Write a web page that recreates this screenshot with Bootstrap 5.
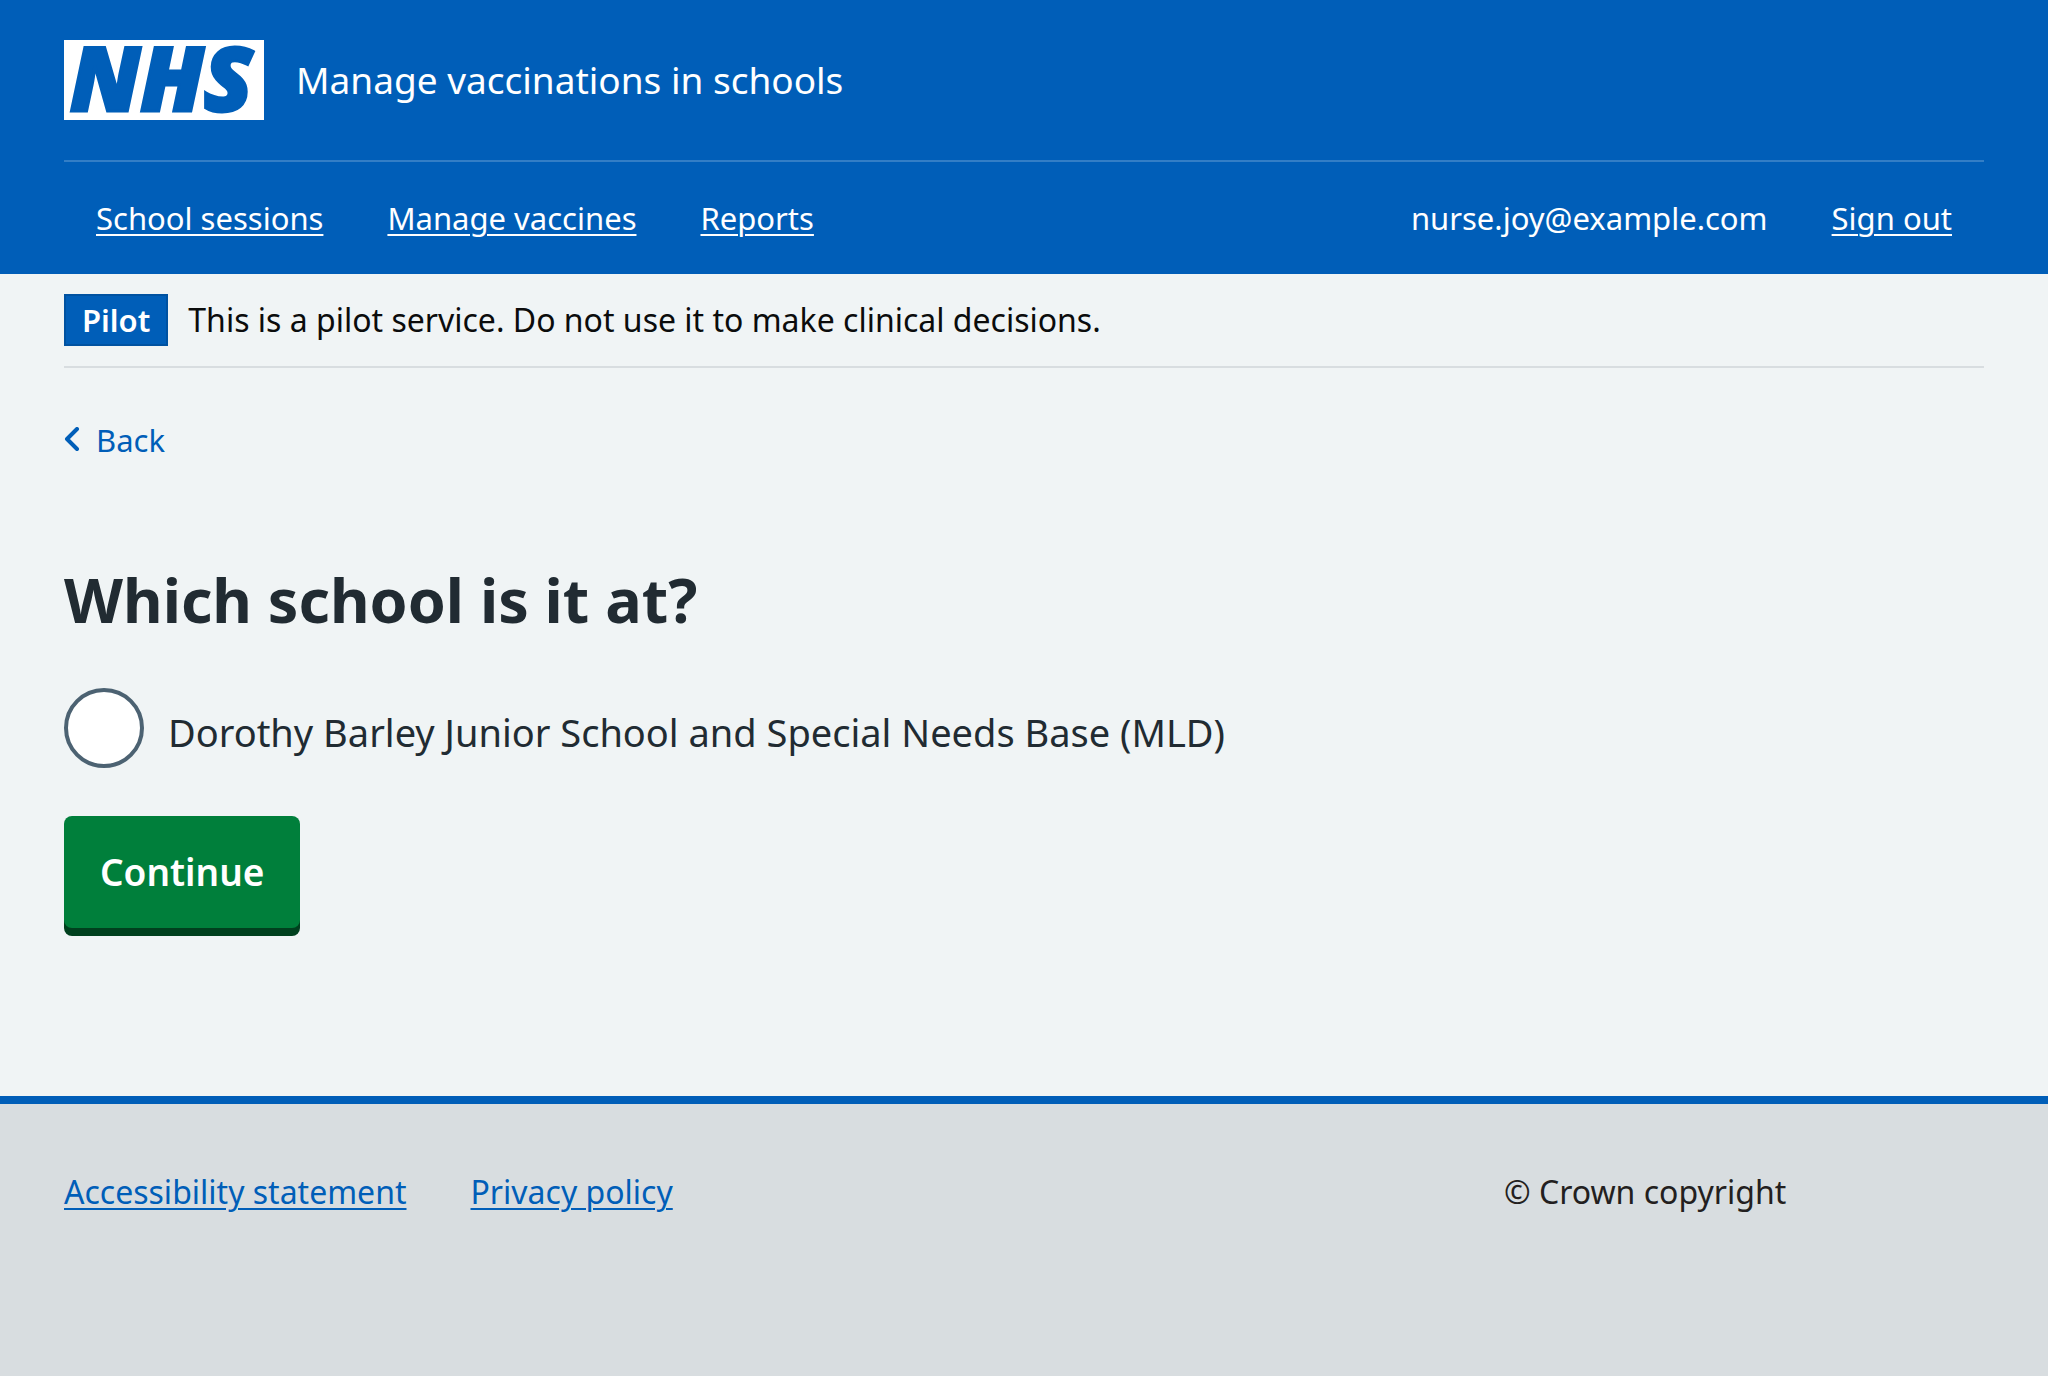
<!DOCTYPE html>
<html lang="en">
<head>
<meta charset="utf-8">
<meta name="viewport" content="width=device-width, initial-scale=1">
<title>Which school is it at? - Manage vaccinations in schools</title>
<link href="https://cdn.jsdelivr.net/npm/bootstrap@5.3.0/dist/css/bootstrap.min.css" rel="stylesheet">
<style>
  :root { --nhs-blue: #005eb8; --nhs-ink: #212b32; --nhs-line: #d8dde0; }
  body {
    font-family: "Noto Sans", "Open Sans", sans-serif;
    font-size: 31px;
    line-height: 48px;
    color: var(--nhs-ink);
    background: #f0f4f5;
  }
  a { color: var(--nhs-blue); text-decoration-thickness: 2px; text-underline-offset: 4px; }
  .page-width { padding-left: 64px; padding-right: 64px; }
  .site-header { background: var(--nhs-blue); color: #fff; }
  .site-header a { color: #fff; }
  .brand-bar { padding: 40px 0; gap: 32px; }
  .brand-logo { width: 200px; height: 80px; display: block; overflow: visible; }
  .brand-logo text {
    font: italic 800 89px "Open Sans", "Noto Sans", sans-serif;
    fill: var(--nhs-blue); stroke: var(--nhs-blue); stroke-width: 3px;
  }
  .service-name { font-size: 37px; }
  .site-nav { border-top: 2px solid #337ec6; padding: 32px; }
  .nav-links { gap: 16px 64px; }
  .phase-banner { border-bottom: 2px solid var(--nhs-line); padding: 20px 0; gap: 20px; color: #0b0c0c; }
  .phase-tag { background: var(--nhs-blue); color: #fff; border: 2px solid #0052a1; padding: 0 16px; font-weight: 600; }
  .phase-text, .site-footer { font-size: 32px; }
  .back-link { gap: 16px; }
  .back-link svg { width: 16px; height: 26px; }
  .page-title { font-size: 61px; line-height: 72px; font-weight: 700; margin: 0 0 52px; }
  .choice { gap: 24px; font-size: 38px; }
  .choice label { padding-top: 8px; }
  .choice .form-check-input { width: 80px; height: 80px; margin: 0; border: 4px solid #4c6272; background-color: #fff; }
  .btn-continue, .btn-continue:hover {
    font-size: 37px; line-height: 48px; font-weight: 600; padding: 32px 36px;
    color: #fff; background: #007f3b; border: 0; border-radius: 8px; box-shadow: 0 8px 0 #00401e;
    margin-top: 48px;
  }
  .back-row { padding: 48px 0 100px; }
  .page-body { padding-bottom: 168px; }
  .site-footer { background: var(--nhs-line); border-top: 8px solid var(--nhs-blue); padding: 64px 0; }
  .legal { color: #231f20; }
</style>
<script src="https://cdn.jsdelivr.net/npm/bootstrap@5.3.0/dist/js/bootstrap.bundle.min.js"></script>
</head>
<body class="d-flex flex-column min-vh-100">
<header class="site-header">
  <div class="container-fluid page-width">
    <div class="brand-bar d-flex flex-wrap align-items-center">
      <svg class="brand-logo" viewBox="0 0 200 80" role="img" aria-label="NHS">
        <rect width="200" height="80" fill="#fff"/>
        <text x="6" y="71">NHS</text>
      </svg>
      <a class="service-name text-decoration-none" href="#">Manage vaccinations in schools</a>
    </div>
    <nav class="site-nav d-flex flex-wrap justify-content-between nav-links" aria-label="Main">
      <div class="d-flex flex-wrap nav-links">
        <a href="#">School sessions</a>
        <a href="#">Manage vaccines</a>
        <a href="#">Reports</a>
      </div>
      <div class="d-flex flex-wrap nav-links">
        <span>nurse.joy@example.com</span>
        <a href="#">Sign out</a>
      </div>
    </nav>
  </div>
</header>
<div class="container-fluid page-width page-body">
  <div class="phase-banner d-flex align-items-center">
    <strong class="phase-tag">Pilot</strong>
    <span class="phase-text">This is a pilot service. Do not use it to make clinical decisions.</span>
  </div>
  <div class="back-row d-flex">
    <a class="back-link d-flex align-items-center text-decoration-none" href="#">
      <svg viewBox="0 0 16 26" fill="none" stroke="currentColor" stroke-width="4" stroke-linecap="round" stroke-linejoin="round" aria-hidden="true"><path d="M13 2 3 12l10 10"/></svg>
      Back
    </a>
  </div>
  <main>
    <form>
      <h1 class="page-title" id="school-title">Which school is it at?</h1>
      <div class="choice d-flex align-items-center" role="radiogroup" aria-labelledby="school-title">
        <input class="form-check-input flex-shrink-0" type="radio" name="school" id="school-1">
        <label for="school-1">Dorothy Barley Junior School and Special Needs Base (MLD)</label>
      </div>
      <button class="btn btn-continue d-block" type="button">Continue</button>
    </form>
  </main>
</div>
<footer class="site-footer flex-grow-1">
  <div class="container-fluid page-width">
    <div class="row g-0">
      <div class="col-9 d-flex flex-wrap nav-links">
        <a href="#">Accessibility statement</a>
        <a href="#">Privacy policy</a>
      </div>
      <div class="col-3 legal">© Crown copyright</div>
    </div>
  </div>
</footer>
</body>
</html>
